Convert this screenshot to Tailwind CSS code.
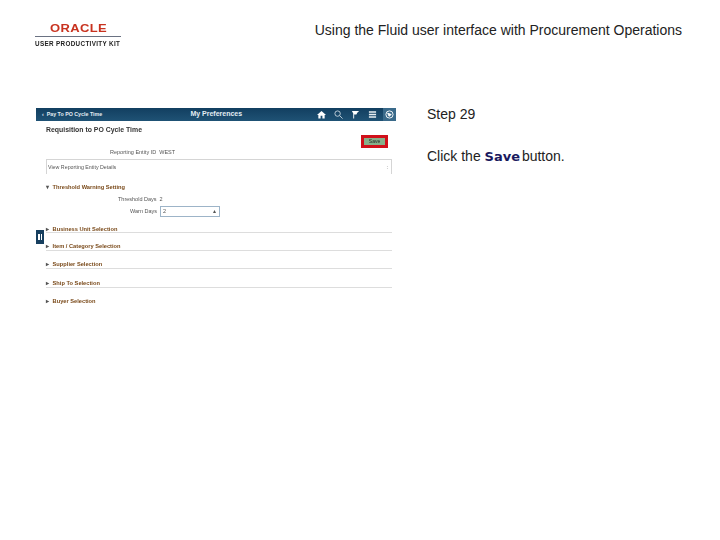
<!DOCTYPE html>
<html lang="en">
<head>
    <meta charset="UTF-8">
    <title>Using the Fluid user interface with Procurement Operations</title>
    <script src="https://cdn.jsdelivr.net/npm/@tailwindcss/browser@4"></script>
</head>
<body class="bg-white font-['Liberation_Sans',Arial,sans-serif] overflow-hidden">
    <div class="w-[720px] h-[540px] relative">
        <!-- Header -->
        <div class="flex justify-between pl-[35px] pr-[38px] pt-[22px] h-[108px]">
            <div class="w-[87px] blur-[0.3px]">
                <div class="text-center text-[#c8321f] text-[10px] leading-[13px] h-[13px] tracking-[0.3px] font-bold [transform:scaleX(1.3)]">ORACLE</div>
                <div class="h-px bg-gray-500 mt-[1px] w-[86px]"></div>
                <div class="text-[6.3px] leading-[7px] mt-[3px] font-bold text-[#222] whitespace-nowrap tracking-[0.35px]">USER PRODUCTIVITY KIT</div>
            </div>
            <div class="text-[14px] leading-[16px] text-[#222] whitespace-nowrap">Using the Fluid user interface with Procurement Operations</div>
        </div>

        <div class="flex pl-[36px]">
            <!-- Screenshot of the app -->
            <div class="w-[360px] h-[202px] relative blur-[0.3px]">
                <div class="h-[13px] bg-gradient-to-b from-[#123f60] to-[#1f5275] flex items-center text-[#e4edf3] text-[5.3px] font-bold pl-[6px]">
                    <span class="w-[111px] whitespace-nowrap">‹&nbsp; Pay To PO Cycle Time</span>
                    <span class="text-[7px] w-[128px] text-center whitespace-nowrap">My Preferences</span>
                    <div class="flex items-center gap-[8px] ml-[37px]">
                        <svg width="9" height="9" viewBox="0 0 10 10" fill="#fff"><path d="M5 1 L10 5.5 H8.5 V9.5 H6 V6.5 H4 V9.5 H1.5 V5.5 H0 Z"/></svg>
                        <svg width="9" height="9" viewBox="0 0 10 10" fill="none" stroke="#c8d6e0" stroke-width="1"><circle cx="4" cy="4" r="3"/><path d="M6.3 6.3 L9.5 9.5"/></svg>
                        <svg width="9" height="9" viewBox="0 0 10 10" fill="#fff"><path d="M1 1 H9 L7 3 L6 5 H3.5 V9.5 H2.5 V4 Z"/></svg>
                        <svg width="9" height="9" viewBox="0 0 10 10" fill="#e8eef2"><path d="M1 1.5 H9 V3 H1 Z M1 4.3 H9 V5.8 H1 Z M1 7 H9 V8.5 H1 Z"/></svg>
                        <div class="w-[13px] h-[13px] bg-[#3a6a8a] flex items-center justify-center -ml-[2px]">
                            <svg width="9" height="9" viewBox="0 0 10 10" fill="none" stroke="#fff" stroke-width="1"><circle cx="5" cy="5" r="4"/><path d="M3 3.5 L7 5 L4.5 7 Z" fill="#fff"/></svg>
                        </div>
                    </div>
                </div>

                <div class="pl-[10px] pr-[4px] text-[5.5px] text-[#555]">
                    <div class="h-[21px] pt-[4px]">
                        <div class="text-[6.9px] leading-[9px] font-bold text-[#333]">Requisition to PO Cycle Time</div>
                    </div>
                    <div class="h-[17px] pl-[64px] pt-[6px] leading-[8px]">
                        <span>Reporting Entity ID&nbsp; WEST</span>
                    </div>
                    <div class="h-[15px] border border-b-0 border-[#d5d5d5] pl-px leading-[14px] flex justify-between pr-[3px] text-[5.3px]">
                        <span>View Reporting Entity Details</span><span>:</span>
                    </div>
                    <div class="mt-[8px] h-[10px] leading-[10px] font-bold text-[#7a4a1a] whitespace-nowrap text-[5.7px]"><span class="text-[#555] mr-[2px]">▾</span> Threshold Warning Setting</div>
                    <div class="pl-[72px] mt-[2px] h-[11px] leading-[11px]">Threshold Days&nbsp; 2</div>
                    <div class="flex items-center h-[12px]">
                        <span class="w-[114px] text-right pr-[3px]">Warn Days</span>
                        <div class="w-[60px] h-[11px] border border-[#9db4c8] leading-[9px] pl-[2px] flex justify-between pr-[3px]"><span>2</span><span>▴</span></div>
                    </div>
                    <div class="font-bold text-[#7a4a1a] text-[5.7px]">
                        <div class="h-[16px] pt-[8px] leading-[8px] border-b border-[#ddd]"><span class="text-[#555] mr-[2px]">▸</span> Business Unit Selection</div>
                        <div class="h-[18px] pt-[9px] leading-[8px] border-b border-[#ddd]"><span class="text-[#555] mr-[2px]">▸</span> Item / Category Selection</div>
                        <div class="h-[18px] pt-[9px] leading-[8px] border-b border-[#ddd]"><span class="text-[#555] mr-[2px]">▸</span> Supplier Selection</div>
                        <div class="h-[19px] pt-[10px] leading-[8px] border-b border-[#ddd]"><span class="text-[#555] mr-[2px]">▸</span> Ship To Selection</div>
                        <div class="h-[18px] pt-[9px] leading-[8px]"><span class="text-[#555] mr-[2px]">▸</span> Buyer Selection</div>
                    </div>
                </div>

                <!-- Save button with highlight -->
                <div class="absolute left-[325px] top-[27px] w-[27px] h-[13px] bg-[#d0101a] p-[3px]">
                    <div class="w-full h-full bg-[#86b08a] text-[5px] leading-[7px] text-center text-[#222]">Save</div>
                </div>
                <!-- Side tab -->
                <div class="absolute left-0 top-[122px] w-[8px] h-[14px] bg-[#173f5f] flex items-center justify-center gap-px">
                    <div class="w-[1.5px] h-[6px] bg-white"></div><div class="w-[1.5px] h-[6px] bg-white"></div>
                </div>
            </div>

            <!-- Instructions -->
            <div class="pl-[31px] text-[14px] leading-[16px] text-[#222]">
                <div class="mt-[-2px]">Step 29</div>
                <div class="mt-[26px] whitespace-nowrap">Click the <span class="font-['DejaVu_Sans',sans-serif] font-bold text-[13px] text-[#1a1a5e] -mr-[2px]">Save</span> button.</div>
            </div>
        </div>
    </div>
</body>
</html>
